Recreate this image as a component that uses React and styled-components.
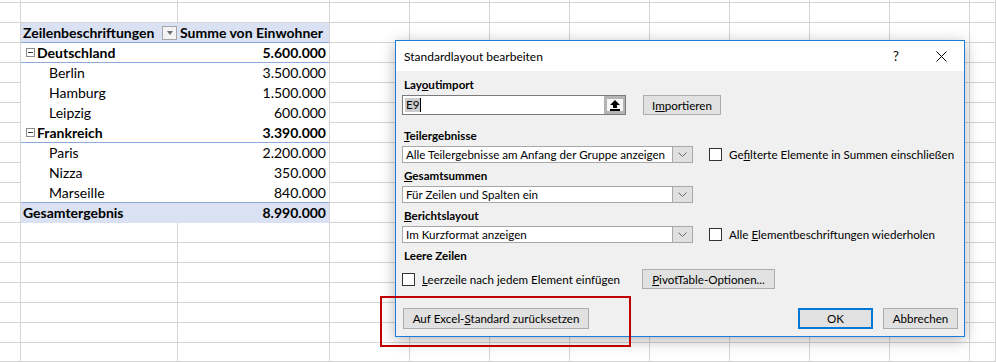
import styled, { createGlobalStyle } from "styled-components";

const GlobalStyle = createGlobalStyle`
  html, body {
    margin: 0;
    padding: 0;
    background: #ffffff;
  }
  body {
    width: 996px;
    height: 362px;
    overflow: hidden;
  }
`;

// ---------- sheet ----------

const Sheet = styled.div`
  position: relative;
  width: 996px;
  height: 362px;
  overflow: hidden;
  display: grid;
  grid-template-columns: 21px 157px 152px repeat(8, 80px) 1fr;
  grid-template-rows: 3px repeat(17, 20px) 1fr;
  background: #ffffff;
`;

const Cell = styled.div`
  box-sizing: border-box;
  border-right: 1px solid #d4d4d4;
  border-bottom: 1px solid #d4d4d4;
`;

const Pivot = styled.div`
  grid-column: 2 / 4;
  grid-row: 3 / 13;
  display: flex;
  flex-direction: column;
  box-sizing: border-box;
  border-right: 1px solid #d4d4d4;
  font-family: Lato, "Liberation Sans", sans-serif;
  font-size: 14px;
  color: #000000;
`;

const PivotRow = styled.div`
  box-sizing: border-box;
  height: 20px;
  display: grid;
  grid-template-columns: 157px 1fr;
  align-items: center;
  background: ${(p) => (p.$fill ? "#d9e1f2" : "#ffffff")};
  border-bottom: 1px solid
    ${(p) => (p.$line ? "#8ea9db" : p.$fill ? "#d9e1f2" : "#ffffff")};
  font-weight: ${(p) => (p.$bold ? 700 : 400)};
`;

const LabelCell = styled.div`
  display: flex;
  align-items: center;
  padding-left: ${(p) => p.$indent || 2}px;
  white-space: nowrap;
`;

const ValueCell = styled.div`
  text-align: ${(p) => (p.$left ? "left" : "right")};
  padding: 0 3px 0 2px;
  white-space: nowrap;
`;

const FilterButton = styled.span`
  margin-left: auto;
  margin-right: 1px;
  width: 15px;
  height: 14px;
  box-sizing: border-box;
  border: 1px solid #a6a6a6;
  background: #f3f3f3;
  display: flex;
  align-items: center;
  justify-content: center;
  &::after {
    content: "";
    border-left: 3.5px solid transparent;
    border-right: 3.5px solid transparent;
    border-top: 4px solid #6d6d6d;
  }
`;

const Collapse = styled.span`
  width: 9px;
  height: 9px;
  box-sizing: border-box;
  border: 1px solid #8c8c8c;
  margin-right: 2px;
  display: flex;
  align-items: center;
  justify-content: center;
  &::after {
    content: "";
    width: 5px;
    height: 1px;
    background: #333333;
  }
`;

// ---------- dialog ----------

const Dialog = styled.div`
  position: absolute;
  left: 395px;
  top: 40px;
  width: 570px;
  height: 297px;
  box-sizing: border-box;
  border: 1px solid #1a7dd7;
  background: #f0f0f0;
  box-shadow: 0 3px 14px rgba(0, 0, 0, 0.3);
  display: flex;
  flex-direction: column;
  font-family: Lato, "Liberation Sans", sans-serif;
  font-size: 11.6px;
  color: #000000;
`;

const TitleBar = styled.div`
  height: 30px;
  background: #ffffff;
  display: flex;
  align-items: center;
  padding-left: 8px;
  font-size: 12px;
`;

const TitleText = styled.span`
  flex: 1;
`;

const TitleButton = styled.span`
  width: ${(p) => p.$w}px;
  height: 30px;
  display: flex;
  align-items: center;
  justify-content: center;
  font-size: 13px;
`;

const Body = styled.div`
  flex: 1;
  display: flex;
  flex-direction: column;
  padding: 7px 6px 7px 6px;
`;

const Label = styled.div`
  height: 14px;
  line-height: 14px;
  padding-left: 2px;
  font-weight: 700;
  margin-top: ${(p) => p.$mt || 0}px;
  white-space: nowrap;
`;

const Row = styled.div`
  display: flex;
  align-items: center;
  margin-top: ${(p) => p.$mt || 3}px;
  height: ${(p) => p.$h || 17}px;
`;

const RefEdit = styled.div`
  box-sizing: border-box;
  width: 224px;
  height: 20px;
  border: 1px solid #7a7a7a;
  background: #ffffff;
  display: flex;
  align-items: stretch;
`;

const RefText = styled.div`
  flex: 1;
  display: flex;
  align-items: center;
  padding-left: 2px;
`;

const Selected = styled.span`
  background: #cccccc;
  line-height: 14px;
  padding: 0 1px;
`;

const Caret = styled.span`
  width: 1px;
  height: 14px;
  background: #000000;
`;

const RefButton = styled.div`
  box-sizing: border-box;
  width: 21px;
  border: 3px solid #b4b4b4;
  border-right-width: 2px;
  background: #f7f7f7;
  display: flex;
  align-items: center;
  justify-content: center;
`;

const Select = styled.div`
  box-sizing: border-box;
  width: 291px;
  height: 17px;
  border: 1px solid #a8a8a8;
  background: #ffffff;
  display: flex;
  align-items: stretch;
  flex-shrink: 0;
`;

const SelectText = styled.div`
  flex: 1;
  display: flex;
  align-items: center;
  padding-left: 3px;
  white-space: nowrap;
  overflow: hidden;
`;

const SelectArrow = styled.div`
  box-sizing: border-box;
  width: 20px;
  background: #e0e0e0;
  border-left: 1px solid #a8a8a8;
  display: flex;
  align-items: center;
  justify-content: center;
`;

const Check = styled.span`
  box-sizing: border-box;
  width: 13px;
  height: 13px;
  border: 1px solid #333333;
  background: #ffffff;
  flex-shrink: 0;
  margin-left: ${(p) => p.$ml || 0}px;
  margin-right: 7px;
`;

const CheckText = styled.span`
  white-space: nowrap;
`;

const LeftSlot = styled.div`
  width: 240px;
  display: flex;
  align-items: center;
`;

const Button = styled.button`
  box-sizing: border-box;
  height: ${(p) => p.$h || 20}px;
  width: ${(p) => p.$w}px;
  margin-left: ${(p) => p.$ml || 0}px;
  padding: 0;
  background: #e1e1e1;
  border: ${(p) => (p.$primary ? "2px solid #0078d7" : "1px solid #adadad")};
  font-family: inherit;
  font-size: 11.6px;
  color: #000000;
  white-space: nowrap;
`;

const Footer = styled.div`
  margin-top: auto;
  display: flex;
  align-items: center;
  padding-left: 1px;
`;

const Spacer = styled.div`
  flex: 1;
`;

const Annotation = styled.div`
  position: absolute;
  left: 380px;
  top: 296px;
  width: 251px;
  height: 51px;
  box-sizing: border-box;
  border: 2px solid #c00000;
`;

const rows = [
  { label: "Deutschland", value: "5.600.000", group: true },
  { label: "Berlin", value: "3.500.000" },
  { label: "Hamburg", value: "1.500.000" },
  { label: "Leipzig", value: "600.000" },
  { label: "Frankreich", value: "3.390.000", group: true },
  { label: "Paris", value: "2.200.000" },
  { label: "Nizza", value: "350.000" },
  { label: "Marseille", value: "840.000", line: true },
];

const Chevron = () => (
  <svg width="9" height="5" viewBox="0 0 9 5">
    <path d="M0.5 0.5 L4.5 4.5 L8.5 0.5" fill="none" stroke="#666" strokeWidth="1" />
  </svg>
);

const UpArrow = () => (
  <svg width="10" height="11" viewBox="0 0 10 11">
    <path d="M5 0 L10 5 L7 5 L7 8 L3 8 L3 5 L0 5 Z" fill="#000" />
    <rect x="0" y="9" width="10" height="2" fill="#000" />
  </svg>
);

const CloseIcon = () => (
  <svg width="11" height="11" viewBox="0 0 11 11">
    <path d="M0.5 0.5 L10.5 10.5 M10.5 0.5 L0.5 10.5" stroke="#000" strokeWidth="1" />
  </svg>
);

export default function App() {
  const cells = Array.from({ length: 19 * 12 - 20 }, (_, i) => <Cell key={i} />);

  return (
    <>
      <GlobalStyle />
      <Sheet>
        <Pivot>
          <PivotRow $fill $line $bold>
            <LabelCell>
              Zeilenbeschriftungen
              <FilterButton />
            </LabelCell>
            <ValueCell $left>Summe von Einwohner</ValueCell>
          </PivotRow>
          {rows.map((r) => (
            <PivotRow key={r.label} $bold={r.group} $line={r.group || r.line}>
              <LabelCell $indent={r.group ? 5 : 28}>
                {r.group && <Collapse />}
                {r.label}
              </LabelCell>
              <ValueCell>{r.value}</ValueCell>
            </PivotRow>
          ))}
          <PivotRow $fill $bold>
            <LabelCell>Gesamtergebnis</LabelCell>
            <ValueCell>8.990.000</ValueCell>
          </PivotRow>
        </Pivot>
        {cells}

        <Dialog>
          <TitleBar>
            <TitleText>Standardlayout bearbeiten</TitleText>
            <TitleButton $w={44}>?</TitleButton>
            <TitleButton $w={46}>
              <CloseIcon />
            </TitleButton>
          </TitleBar>
          <Body>
            <Label>
              Lay<u>o</u>utimport
            </Label>
            <Row $h={20}>
              <RefEdit>
                <RefText>
                  <Selected>E9</Selected>
                  <Caret />
                </RefText>
                <RefButton>
                  <UpArrow />
                </RefButton>
              </RefEdit>
              <Button $w={78} $ml={17}>
                I<u>m</u>portieren
              </Button>
            </Row>

            <Label $mt={14}>
              <u>T</u>eilergebnisse
            </Label>
            <Row>
              <Select>
                <SelectText>Alle Teilergebnisse am Anfang der Gruppe anzeigen</SelectText>
                <SelectArrow>
                  <Chevron />
                </SelectArrow>
              </Select>
              <Check $ml={16} />
              <CheckText>
                Ge<u>f</u>ilterte Elemente in Summen einschließen
              </CheckText>
            </Row>

            <Label $mt={6}>
              <u>G</u>esamtsummen
            </Label>
            <Row>
              <Select>
                <SelectText>Für Zeilen und Spalten ein</SelectText>
                <SelectArrow>
                  <Chevron />
                </SelectArrow>
              </Select>
            </Row>

            <Label $mt={6}>
              <u>B</u>erichtslayout
            </Label>
            <Row>
              <Select>
                <SelectText>Im Kurzformat anzeigen</SelectText>
                <SelectArrow>
                  <Chevron />
                </SelectArrow>
              </Select>
              <Check $ml={16} />
              <CheckText>
                Alle <u>E</u>lementbeschriftungen wiederholen
              </CheckText>
            </Row>

            <Label $mt={6}>Leere Zeilen</Label>
            <Row $mt={6} $h={20}>
              <LeftSlot>
                <Check />
                <CheckText>
                  <u>L</u>eerzeile nach jedem Element einfügen
                </CheckText>
              </LeftSlot>
              <Button $w={133}>
                <u>P</u>ivotTable-Optionen...
              </Button>
            </Row>

            <Footer>
              <Button $w={186} $h={21}>
                Auf Excel-<u>S</u>tandard zurücksetzen
              </Button>
              <Spacer />
              <Button $w={75} $h={21} $primary>
                OK
              </Button>
              <Button $w={75} $h={21} $ml={10}>
                Abbrechen
              </Button>
            </Footer>
          </Body>
        </Dialog>

        <Annotation />
      </Sheet>
    </>
  );
}
